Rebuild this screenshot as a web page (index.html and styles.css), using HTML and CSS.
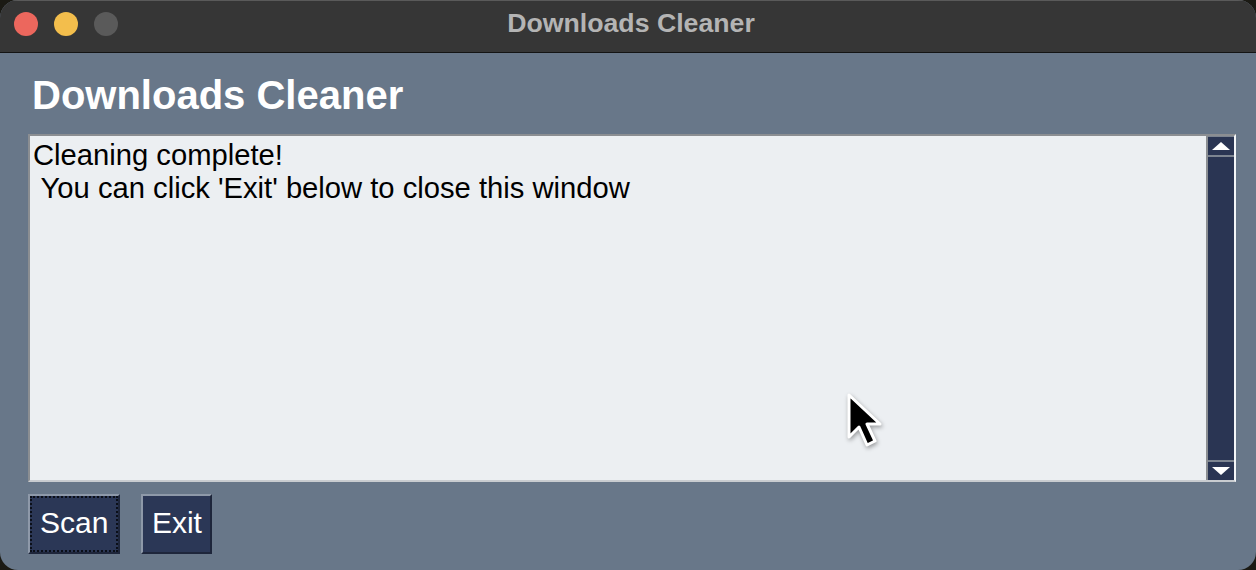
FILE: index.html
```html
<!DOCTYPE html>
<html>
<head>
<meta charset="utf-8">
<title>Downloads Cleaner</title>
<link rel="stylesheet" href="styles.css">
</head>
<body>
<div class="window">
  <div class="titlebar">
    <div class="lights">
      <span class="light red"></span>
      <span class="light yellow"></span>
      <span class="light gray"></span>
    </div>
    <div class="title">Downloads Cleaner</div>
  </div>
  <div class="content">
    <h1 class="heading">Downloads Cleaner</h1>
    <div class="frame">
      <div class="textarea">
        <div class="line">Cleaning complete!</div>
        <div class="line"> You can click 'Exit' below to close this window</div>
      </div>
      <div class="scrollbar">
        <div class="arrow up"><svg width="18" height="8" viewBox="0 0 18 8"><polygon points="9,0 18,8 0,8" fill="#fff"/></svg></div>
        <div class="track"></div>
        <div class="arrow down"><svg width="18" height="8" viewBox="0 0 18 8"><polygon points="0,0 18,0 9,8" fill="#fff"/></svg></div>
      </div>
    </div>
    <div class="buttons">
      <button class="btn focused">Scan</button>
      <button class="btn btn-exit">Exit</button>
    </div>
  </div>
  <svg class="cursor" width="40" height="60" viewBox="0 0 40 60">
    <polygon points="3,3 3,45 13,35 21,53 29,49 21,32 34,32" fill="#000" stroke="#fff" stroke-width="3" stroke-linejoin="round"/>
  </svg>
</div>
</body>
</html>
```
FILE: styles.css
```css
html, body {
  margin: 0;
  padding: 0;
  background: #1b1a14;
}
.window {
  position: relative;
  width: 1256px;
  height: 570px;
  border-radius: 18px;
  overflow: hidden;
  background: #687789;
  font-family: "Liberation Sans", Arial, Helvetica, sans-serif;
  display: flex;
  flex-direction: column;
}
.titlebar {
  height: 52px;
  flex: none;
  background: #363636;
  border-bottom: 1px solid #141414;
  box-shadow: inset 0 1px 0 #5a5a5a;
  position: relative;
  display: flex;
  align-items: center;
  justify-content: center;
}
.lights {
  position: absolute;
  left: 14px;
  top: 12px;
  display: flex;
  gap: 16px;
}
.light {
  width: 24px;
  height: 24px;
  border-radius: 50%;
  display: block;
}
.red { background: #ec675d; }
.yellow { background: #f3be4c; }
.gray { background: #5a5a5a; }
.title {
  color: #b4b4b4;
  font-weight: bold;
  font-size: 26.7px;
  margin-left: 6px;
  margin-top: -5px;
}
.content {
  flex: 1;
  padding: 19px 20px 0 28px;
  display: flex;
  flex-direction: column;
}
.heading {
  margin: 0 0 16px 4px;
  font-size: 40px;
  line-height: 46px;
  font-weight: bold;
  color: #fff;
}
.frame {
  height: 344px;
  display: flex;
  border-top: 2px solid #8b8e92;
  border-left: 2px solid #8b8e92;
  border-bottom: 2px solid #c9ccd0;
  border-right: 2px solid #f4f6f8;
}
.textarea {
  flex: 1;
  background: #eceff2;
  padding: 3px 3px;
  color: #000;
  font-size: 29.2px;
  line-height: 33px;
  border-right: 2px solid #8b8e92;
}
.line {
  white-space: pre;
}
.scrollbar {
  width: 26px;
  background: #2a3553;
  display: flex;
  flex-direction: column;
  border-top: 1px solid #7d8591;
}
.arrow {
  height: 18px;
  display: flex;
  align-items: center;
  justify-content: center;
}
.arrow.up { border-bottom: 2px solid #7d8591; }
.arrow.down { border-top: 2px solid #7d8591; }
.track { flex: 1; }
.buttons {
  display: flex;
  gap: 21px;
  margin-top: 12px;
}
.btn {
  height: 60px;
  padding: 0 10px 2px;
  background: #2b3756;
  color: #fff;
  font-family: "Liberation Sans", Arial, Helvetica, sans-serif;
  font-size: 30px;
  border-style: solid;
  border-width: 2px;
  border-color: #8e99a9 #1e263b #1e263b #8e99a9;
  border-radius: 0;
}
.btn-exit {
  padding: 0 8.5px 2px;
}
.btn.focused {
  outline: 2px dotted #0b0f18;
  outline-offset: -4px;
}
.cursor {
  position: absolute;
  left: 846px;
  top: 392px;
  filter: drop-shadow(1px 2px 2px rgba(0,0,0,0.35));
}
```
